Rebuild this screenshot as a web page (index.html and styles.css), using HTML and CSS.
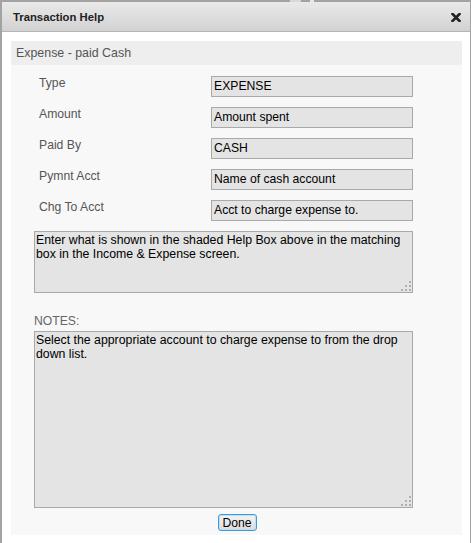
FILE: index.html
```html
<!DOCTYPE html>
<html>
<head>
<meta charset="utf-8">
<link rel="stylesheet" href="styles.css">
<title>Transaction Help</title>
</head>
<body>
<div class="dialog">
  <div class="peek peek-a"></div>
  <div class="peek peek-b"></div>
  <div class="titlebar">
    <span class="title">Transaction Help</span>
    <svg class="close" width="10" height="9" viewBox="0 0 10 9">
      <path d="M1.5 1 L8.5 8 M8.5 1 L1.5 8" stroke="#222" stroke-width="2.6" stroke-linecap="square" fill="none"/>
    </svg>
  </div>
  <div class="body">
    <div class="panel">
      <div class="panel-head">Expense - paid Cash</div>
      <div class="panel-content">
        <div class="rows">
          <div class="row"><span class="label">Type</span><div class="field">EXPENSE</div></div>
          <div class="row"><span class="label">Amount</span><div class="field">Amount spent</div></div>
          <div class="row"><span class="label">Paid By</span><div class="field">CASH</div></div>
          <div class="row"><span class="label">Pymnt Acct</span><div class="field">Name of cash account</div></div>
          <div class="row"><span class="label">Chg To Acct</span><div class="field">Acct to charge expense to.</div></div>
        </div>
        <div class="area-wrap area-help">
          <textarea class="area" readonly>Enter what is shown in the shaded Help Box above in the matching
box in the Income &amp; Expense screen.</textarea>
          <span class="grip"></span>
        </div>
        <div class="notes-label">NOTES:</div>
        <div class="area-wrap area-notes">
          <textarea class="area" readonly>Select the appropriate account to charge expense to from the drop
down list.</textarea>
          <span class="grip"></span>
        </div>
        <div class="actions"><button class="done" type="button">Done</button></div>
      </div>
    </div>
  </div>
</div>
</body>
</html>
```
FILE: styles.css
```css
html, body {
  margin: 0;
  padding: 0;
  background: #ffffff;
  overflow: hidden;
}
body {
  font-family: "Liberation Sans", Arial, sans-serif;
  font-size: 12px;
}
.dialog {
  position: relative;
  box-sizing: border-box;
  width: 471px;
  height: 560px;
  border-top: 2px solid #a3a3a3;
  border-left: 2px solid #a3a3a3;
  border-right: 1px solid #a3a3a3;
  background: #fff;
}
.peek {
  position: absolute;
  top: -2px;
  height: 2px;
  background: #d8d8d8;
}
.peek-a { left: 288px; width: 11px; }
.peek-b { left: 308px; width: 4px; background: #e6e6e6; }
.titlebar {
  display: flex;
  align-items: center;
  justify-content: space-between;
  height: 29px;
  padding: 0 9px 0 11px;
  background: linear-gradient(to bottom, #e9e9e9, #d2d2d2);
  border-bottom: 1px solid #b5b5b5;
}
.title {
  font-weight: bold;
  font-size: 11.3px;
  color: #222;
  padding-top: 1px;
}
.close {
  display: block;
  margin-top: 1px;
}
.body {
  padding: 9px 8px 0 9px;
}
.panel-head {
  height: 24px;
  line-height: 24px;
  padding-left: 5px;
  background: #eeeeee;
  color: #555;
  font-size: 12.4px;
}
.panel-content {
  background: #f8f8f8;
  padding: 11px 0 4px 0;
}
.rows {
  display: flex;
  flex-direction: column;
  gap: 10px;
  padding-left: 28px;
}
.row {
  display: flex;
  align-items: flex-start;
}
.label {
  width: 172px;
  line-height: 14px;
  color: #555;
  font-size: 12.2px;
}
.field {
  box-sizing: border-box;
  width: 202px;
  height: 21px;
  line-height: 19px;
  padding: 0 2px;
  border: 1px solid #a9a9a9;
  background: #e4e4e4;
  color: #000;
  font-size: 12.2px;
}
.area-wrap {
  position: relative;
  margin-left: 23px;
  width: 379px;
}
.area-help { margin-top: 10px; height: 62px; }
.area-notes { height: 177px; }
.area {
  display: block;
  box-sizing: border-box;
  width: 100%;
  height: 100%;
  margin: 0;
  padding: 1px;
  border: 1px solid #a9a9a9;
  background: #e4e4e4;
  color: #000;
  font-family: "Liberation Sans", Arial, sans-serif;
  font-size: 12.3px;
  line-height: 14px;
  resize: none;
  overflow: hidden;
  outline: none;
}
.grip {
  position: absolute;
  right: 2px;
  bottom: 2px;
  width: 10px;
  height: 10px;
  background:
    linear-gradient(#b0b0b0, #b0b0b0) 8px 0 / 2px 2px no-repeat,
    linear-gradient(#b0b0b0, #b0b0b0) 4px 4px / 2px 2px no-repeat,
    linear-gradient(#b0b0b0, #b0b0b0) 8px 4px / 2px 2px no-repeat,
    linear-gradient(#b0b0b0, #b0b0b0) 0 8px / 2px 2px no-repeat,
    linear-gradient(#b0b0b0, #b0b0b0) 4px 8px / 2px 2px no-repeat,
    linear-gradient(#b0b0b0, #b0b0b0) 8px 8px / 2px 2px no-repeat;
}
.notes-label {
  margin: 21px 0 3px 23px;
  line-height: 14px;
  color: #666;
  font-size: 12.2px;
}
.actions {
  display: flex;
  justify-content: center;
  margin-top: 6px;
}
.done {
  box-sizing: border-box;
  width: 39px;
  height: 17px;
  margin: 0 0 0 1px;
  padding: 0;
  border: 1px solid #3d9bd9;
  border-radius: 3px;
  background: linear-gradient(to bottom, #f4f4f4, #dcdcdc);
  box-shadow: inset 0 0 0 1px #bde0f5;
  color: #000;
  font-family: "Liberation Sans", Arial, sans-serif;
  font-size: 12.2px;
  line-height: 14px;
}
```
